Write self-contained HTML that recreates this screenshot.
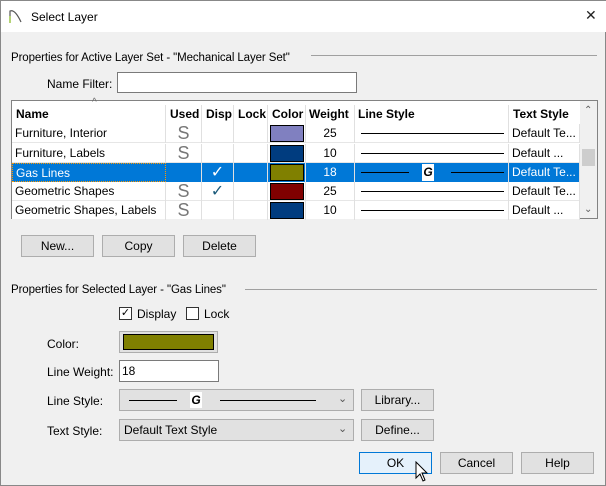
<!DOCTYPE html><html><head><style>
*{box-sizing:border-box;margin:0;padding:0}
body{width:606px;height:486px;background:#f0f0f0;font-family:"Liberation Sans",sans-serif;font-size:12px;color:#000;position:relative;overflow:hidden;border:1px solid #888}
.a{position:absolute}
.btn{position:absolute;background:#e1e1e1;border:1px solid #adadad;text-align:center;line-height:20px}
.lbl{position:absolute;white-space:nowrap}
.row{position:absolute;left:0;width:568px;height:19px;border-bottom:1px solid #e6e6e6;background:#fff}
.c{position:absolute;top:0;height:19px;line-height:19px;border-right:1px solid #e0e0e0;white-space:nowrap;overflow:hidden}
.sw{position:absolute;left:2px;top:1px;width:34px;height:17px;border:1px solid #000}
.ln{position:absolute;top:9px;height:1px;background:#000}
.s{color:#777;font-size:18px;text-align:center}
.h{font-weight:bold}
</style></head><body>
<div class="a" style="left:0;top:0;width:606px;height:31px;background:#fff"></div>
<svg class="a" style="left:8px;top:7px" width="14" height="16"><path d="M1 15 V3 Q6 1 12 14" fill="none" stroke="#555" stroke-width="1.2"/><path d="M1 15V8" stroke="#9c3" stroke-width="1.2"/></svg>
<div class="lbl" style="left:30px;top:9px">Select Layer</div>
<div class="lbl" style="left:584px;top:6px;font-size:14px;color:#222">✕</div>

<div class="lbl" style="left:10px;top:51px;font-size:11.5px;letter-spacing:-0.1px">Properties for Active Layer Set - "Mechanical Layer Set"</div>
<div class="a" style="left:310px;top:54px;width:286px;height:1px;background:#a0a0a0"></div>
<div class="lbl" style="left:46px;top:76px">Name Filter:</div>
<div class="a" style="left:116px;top:71px;width:240px;height:21px;background:#fff;border:1px solid #7a7a7a"></div>

<div class="a" style="left:10px;top:99px;width:587px;height:119px;background:#fff;border:1px solid #828282">
 <div class="row" style="top:0;height:23px;border:none">
  <div class="lbl" style="left:80px;top:-4px;font-size:10px;color:#666">^</div>
  <div class="c h" style="left:0;width:154px;top:4px;padding-left:4px">Name</div>
  <div class="c h" style="left:154px;width:36px;top:4px;padding-left:4px">Used</div>
  <div class="c h" style="left:190px;width:32px;top:4px;padding-left:4px">Disp</div>
  <div class="c h" style="left:222px;width:34px;top:4px;padding-left:4px">Lock</div>
  <div class="c h" style="left:256px;width:38px;top:4px;padding-left:4px">Color</div>
  <div class="c h" style="left:294px;width:49px;top:4px;padding-left:3px">Weight</div>
  <div class="c h" style="left:343px;width:154px;top:4px;padding-left:3px">Line Style</div>
  <div class="c h" style="left:497px;width:71px;top:4px;padding-left:4px;border:none">Text Style</div>
 </div>
 <div class="row" style="top:23px"><div class="c" style="left:0;width:154px;padding-left:3px">Furniture, Interior</div><div class="c s" style="left:154px;width:36px">S</div><div class="c" style="left:190px;width:32px"></div><div class="c" style="left:222px;width:34px"></div><div class="c" style="left:256px;width:38px"><div class="sw" style="background:#8080c0"></div></div><div class="c" style="left:294px;width:49px;text-align:center">25</div><div class="c" style="left:343px;width:154px"><div class="ln" style="left:6px;width:143px"></div></div><div class="c" style="left:497px;width:71px;padding-left:3px">Default Te...</div></div>
 <div class="row" style="top:43px"><div class="c" style="left:0;width:154px;padding-left:3px">Furniture, Labels</div><div class="c s" style="left:154px;width:36px">S</div><div class="c" style="left:190px;width:32px"></div><div class="c" style="left:222px;width:34px"></div><div class="c" style="left:256px;width:38px"><div class="sw" style="background:#003c7f"></div></div><div class="c" style="left:294px;width:49px;text-align:center">10</div><div class="c" style="left:343px;width:154px"><div class="ln" style="left:6px;width:143px"></div></div><div class="c" style="left:497px;width:71px;padding-left:3px">Default ...</div></div>
 <div class="row" style="top:62px;background:#0078d7;color:#fff;border:none"><div class="c" style="left:0;width:154px;padding-left:3px;border:1px dotted #f90">Gas Lines</div><div class="c" style="left:154px;width:36px"></div><div class="c" style="left:190px;width:32px;text-align:center;font-size:16px">✓</div><div class="c" style="left:222px;width:34px"></div><div class="c" style="left:256px;width:38px"><div class="sw" style="background:#808000"></div></div><div class="c" style="left:294px;width:49px;text-align:center">18</div><div class="c" style="left:343px;width:154px"><div class="ln" style="left:6px;width:48px"></div><div class="a" style="left:67px;top:1px;width:12px;height:17px;background:#fff;color:#000;font-style:italic;font-weight:bold;text-align:center;line-height:17px">G</div><div class="ln" style="left:96px;width:53px"></div></div><div class="c" style="left:497px;width:71px;padding-left:3px">Default Te...</div></div>
 <div class="row" style="top:81px"><div class="c" style="left:0;width:154px;padding-left:3px">Geometric Shapes</div><div class="c s" style="left:154px;width:36px">S</div><div class="c" style="left:190px;width:32px;text-align:center;color:#1a5a7a;font-size:16px">✓</div><div class="c" style="left:222px;width:34px"></div><div class="c" style="left:256px;width:38px"><div class="sw" style="background:#800000"></div></div><div class="c" style="left:294px;width:49px;text-align:center">25</div><div class="c" style="left:343px;width:154px"><div class="ln" style="left:6px;width:143px"></div></div><div class="c" style="left:497px;width:71px;padding-left:3px">Default Te...</div></div>
 <div class="row" style="top:100px;height:18px;border:none"><div class="c" style="left:0;width:154px;padding-left:3px">Geometric Shapes, Labels</div><div class="c s" style="left:154px;width:36px">S</div><div class="c" style="left:190px;width:32px"></div><div class="c" style="left:222px;width:34px"></div><div class="c" style="left:256px;width:38px"><div class="sw" style="background:#003c7f"></div></div><div class="c" style="left:294px;width:49px;text-align:center">10</div><div class="c" style="left:343px;width:154px"><div class="ln" style="left:6px;width:143px"></div></div><div class="c" style="left:497px;width:71px;padding-left:3px">Default ...</div></div>
 <div class="a" style="left:568px;top:0;width:17px;height:117px;background:#f0f0f0"></div>
 <div class="a" style="left:570px;top:48px;width:13px;height:17px;background:#cdcdcd"></div>
 <div class="lbl" style="left:572px;top:4px;font-size:10px;color:#606060">⌃</div>
 <div class="lbl" style="left:572px;top:103px;font-size:10px;color:#606060">⌄</div>
</div>

<div class="btn" style="left:20px;top:234px;width:73px;height:22px">New...</div>
<div class="btn" style="left:101px;top:234px;width:73px;height:22px">Copy</div>
<div class="btn" style="left:182px;top:234px;width:73px;height:22px">Delete</div>

<div class="lbl" style="left:10px;top:283px;font-size:11.5px;letter-spacing:-0.1px">Properties for Selected Layer - "Gas Lines"</div>
<div class="a" style="left:244px;top:288px;width:352px;height:1px;background:#a0a0a0"></div>
<div class="a" style="left:118px;top:306px;width:13px;height:13px;border:1px solid #333;background:#fff;font-size:11px;line-height:11px;text-align:center">✓</div>
<div class="lbl" style="left:136px;top:306px">Display</div>
<div class="a" style="left:185px;top:306px;width:13px;height:13px;border:1px solid #333;background:#fff"></div>
<div class="lbl" style="left:203px;top:306px">Lock</div>

<div class="lbl" style="left:46px;top:336px">Color:</div>
<div class="a" style="left:118px;top:330px;width:99px;height:22px;background:#e1e1e1;border:1px solid #adadad"><div class="a" style="left:3px;top:2px;width:91px;height:16px;background:#808000;border:1px solid #000"></div></div>
<div class="lbl" style="left:46px;top:364px">Line Weight:</div>
<div class="a" style="left:118px;top:359px;width:100px;height:22px;background:#fff;border:1px solid #7a7a7a;padding:3px 2px">18</div>
<div class="lbl" style="left:46px;top:393px">Line Style:</div>
<div class="a" style="left:118px;top:388px;width:235px;height:22px;background:#e1e1e1;border:1px solid #adadad">
 <div class="a" style="left:9px;top:10px;width:48px;height:1px;background:#000"></div>
 <div class="a" style="left:70px;top:2px;width:12px;height:16px;background:#fff;font-style:italic;font-weight:bold;text-align:center;line-height:16px">G</div>
 <div class="a" style="left:100px;top:10px;width:96px;height:1px;background:#000"></div>
 <div class="lbl" style="left:218px;top:2px;color:#555;font-size:11px">⌄</div>
</div>
<div class="btn" style="left:360px;top:388px;width:73px;height:22px">Library...</div>
<div class="lbl" style="left:46px;top:423px">Text Style:</div>
<div class="a" style="left:118px;top:418px;width:235px;height:22px;background:#e1e1e1;border:1px solid #adadad;padding:3px 4px">Default Text Style<div class="lbl" style="left:218px;top:2px;color:#555;font-size:11px">⌄</div></div>
<div class="btn" style="left:360px;top:418px;width:73px;height:22px">Define...</div>

<div class="btn" style="left:358px;top:451px;width:73px;height:22px;background:#e5f1fb;border-color:#0078d7">OK</div>
<svg class="a" style="left:414px;top:460px" width="14" height="22"><path d="M1 1V17L5 13L8 20L10 19L7 12H12Z" fill="#fff" stroke="#000"/></svg>
<div class="btn" style="left:439px;top:451px;width:73px;height:22px">Cancel</div>
<div class="btn" style="left:520px;top:451px;width:73px;height:22px">Help</div>
</body></html>
